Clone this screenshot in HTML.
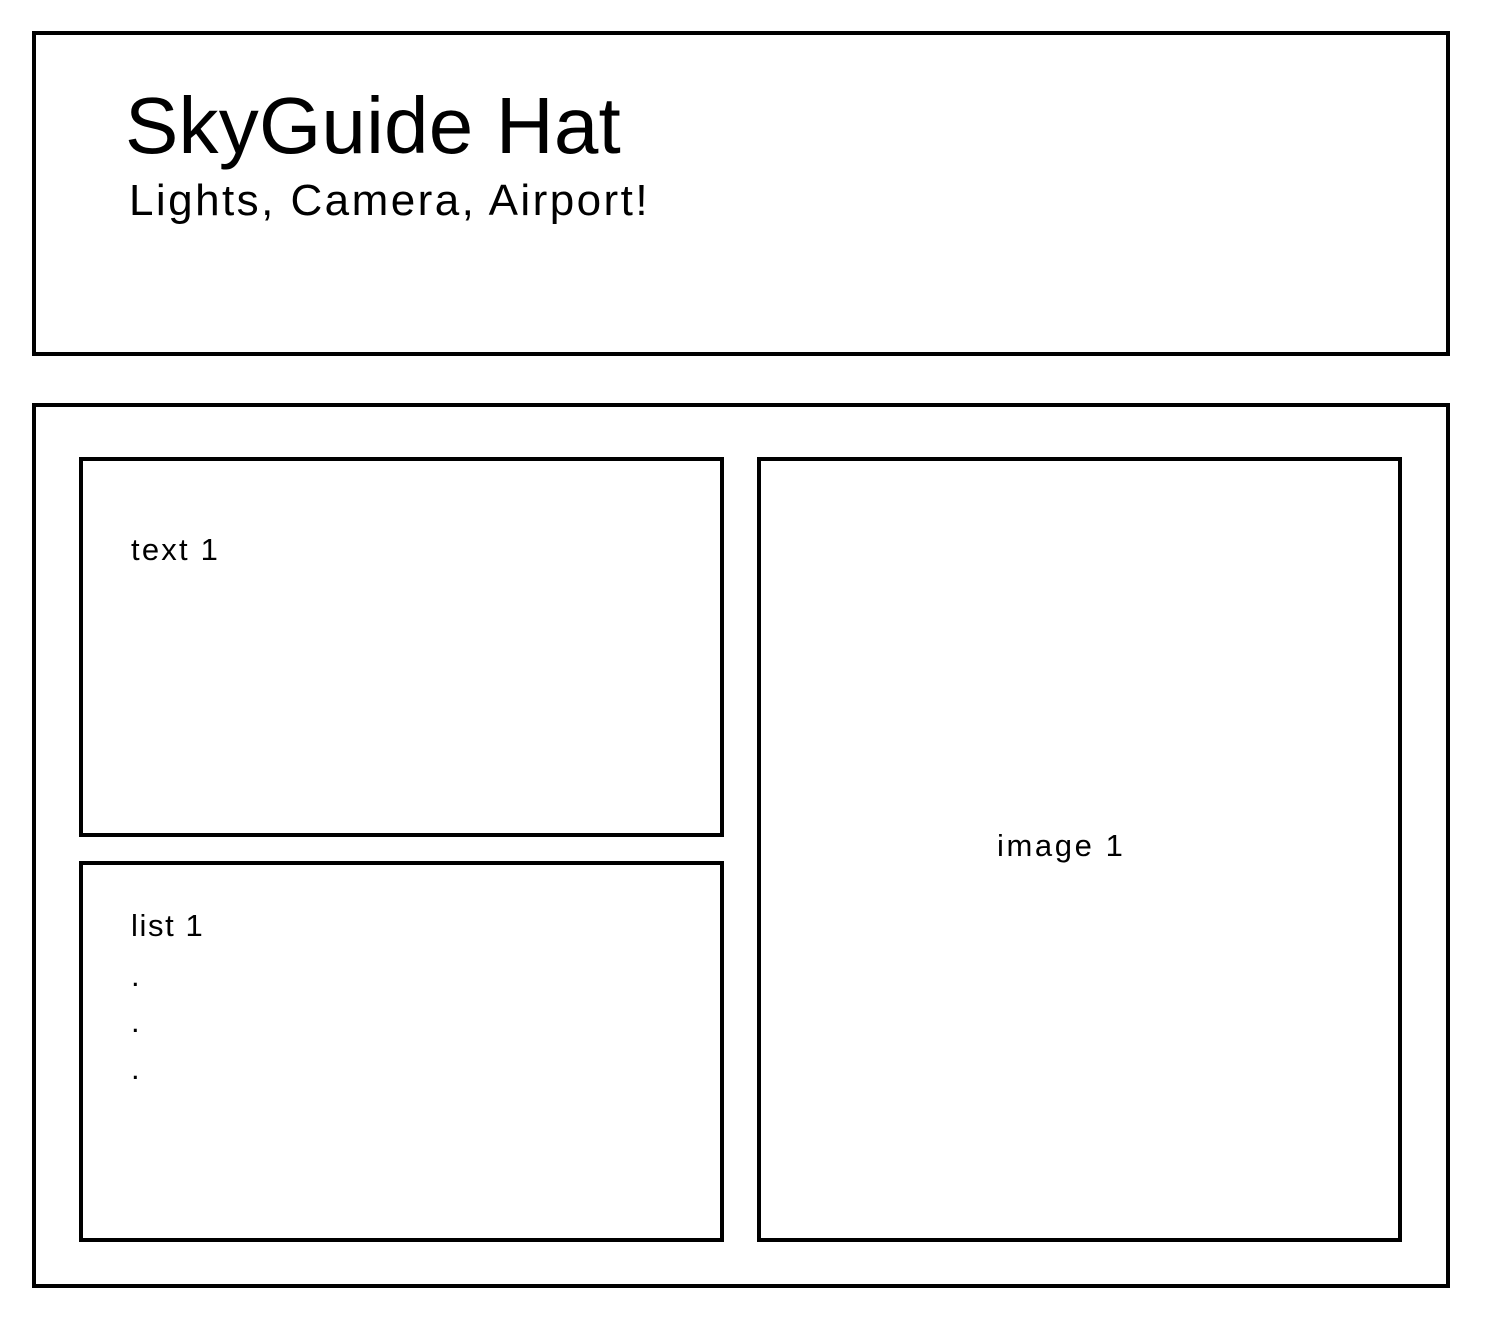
<!DOCTYPE html>
<html><head><style>
html,body{margin:0;padding:0;background:#fff;width:1488px;height:1322px;overflow:hidden}
.b{position:absolute;border:4px solid #000;box-sizing:border-box}
.t{position:absolute;font-family:"Liberation Sans",sans-serif;color:#000;line-height:1;white-space:nowrap}
</style></head><body>
<div class="b" style="left:32px;top:31px;width:1418px;height:325px"></div>
<div class="b" style="left:32px;top:403px;width:1418px;height:885px"></div>
<div class="b" style="left:79px;top:457px;width:645px;height:380px"></div>
<div class="b" style="left:79px;top:861px;width:645px;height:381px"></div>
<div class="b" style="left:757px;top:457px;width:645px;height:785px"></div>
<div class="t" style="left:125px;top:86px;font-size:80px;letter-spacing:0.2px">SkyGuide Hat</div>
<div class="t" style="left:129px;top:179px;font-size:44px;letter-spacing:2.45px">Lights, Camera, Airport!</div>
<div class="t" style="left:131px;top:534px;font-size:31px;letter-spacing:2.2px">text 1</div>
<div class="t" style="left:131px;top:910px;font-size:31px;letter-spacing:1.6px">list 1</div>
<div class="t" style="left:131px;top:960px;font-size:31px">.</div>
<div class="t" style="left:131px;top:1006px;font-size:31px">.</div>
<div class="t" style="left:131px;top:1053px;font-size:31px">.</div>
<div class="t" style="left:997px;top:830px;font-size:31px;letter-spacing:2.6px">image 1</div>
</body></html>
